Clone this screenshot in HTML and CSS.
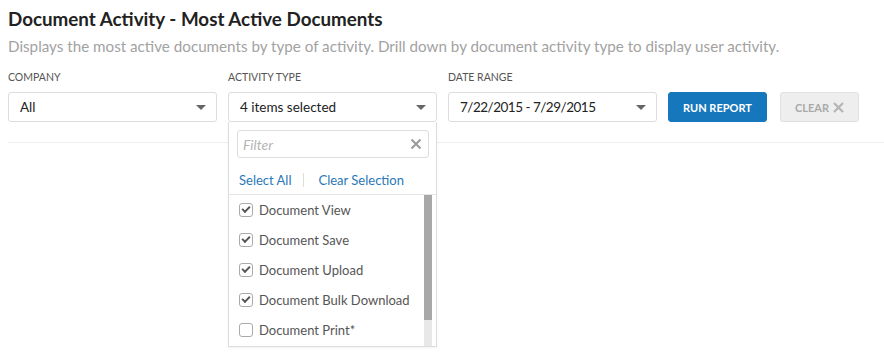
FILE: index.html
```html
<!doctype html>
<html lang="en">
  <head>
    <meta charset="UTF-8">
    <title>Document Activity - Most Active Documents</title>
    <link rel="stylesheet" href="styles.css">
  </head>
  <body>
    <div class="report">
      <h1 class="title">Document Activity - Most Active Documents</h1>
      <p class="subtitle">Displays the most active documents by type of activity. Drill down by document activity type to display user activity.</p>

      <div class="filters">
        <div class="field">
          <div class="fieldLabel">COMPANY</div>
          <div class="select">
            <span>All</span>
            <span class="caret"></span>
          </div>
        </div>

        <div class="field activityField">
          <div class="fieldLabel">ACTIVITY TYPE</div>
          <div class="select">
            <span>4 items selected</span>
            <span class="caret"></span>
          </div>
          <div class="dropdown">
            <div class="filterWrap">
              <div class="filterBox">
                <span class="placeholder">Filter</span>
                <svg class="clearIcon" width="12" height="12" viewBox="0 0 12 12">
                  <path d="M1.5 1.5 L10.5 10.5 M10.5 1.5 L1.5 10.5" stroke="#9a9a9a" stroke-width="2" fill="none"/>
                </svg>
              </div>
            </div>
            <div class="links">
              <a href="#">Select All</a>
              <span class="sep"></span>
              <a href="#">Clear Selection</a>
            </div>
            <div class="listWrap">
              <ul class="options">
                <li><span class="check on"></span>Document View</li>
                <li><span class="check on"></span>Document Save</li>
                <li><span class="check on"></span>Document Upload</li>
                <li><span class="check on"></span>Document Bulk Download</li>
                <li><span class="check"></span>Document Print*</li>
              </ul>
              <div class="scrollbar"><div class="thumb"></div></div>
            </div>
          </div>
        </div>

        <div class="field">
          <div class="fieldLabel">DATE RANGE</div>
          <div class="select">
            <span class="dateText">7/22/2015 - 7/29/2015</span>
            <span class="caret"></span>
          </div>
        </div>

        <button class="btn runBtn" type="button">RUN REPORT</button>
        <button class="btn clearBtn" type="button">CLEAR
          <svg width="11" height="11" viewBox="0 0 11 11">
            <path d="M1 1 L10 10 M10 1 L1 10" stroke="#b4b4b4" stroke-width="2.2" fill="none"/>
          </svg>
        </button>
      </div>

      <div class="divider"></div>
    </div>
  </body>
</html>
```

FILE: styles.css
```css
html, body {
  min-height: 100%;
}

body {
  margin: 0;
  min-height: 362px;
  background: #fff;
  font-family: Lato, "Open Sans", sans-serif;
}

.report {
  padding: 8px 0 0 8px;
}

.title {
  margin: 0;
  font-size: 18.8px;
  font-weight: bold;
  color: #222;
  line-height: 22px;
}

.subtitle {
  margin: 6px 0 0 0;
  font-size: 15.2px;
  color: #a2a2a2;
  line-height: 20px;
}

.filters {
  display: flex;
  align-items: flex-end;
  margin-top: 14px;
}

.field {
  width: 209px;
  margin-right: 11px;
}

.activityField {
  position: relative;
}

.fieldLabel {
  font-size: 10.5px;
  color: #555;
  line-height: 14px;
  margin-bottom: 8px;
}

.select {
  box-sizing: border-box;
  height: 30px;
  border: 1px solid #ddd;
  border-radius: 3px;
  display: flex;
  align-items: center;
  justify-content: space-between;
  padding: 0 10px 0 11px;
  font-size: 13.5px;
  color: #222;
}

.dateText {
  letter-spacing: -0.5px;
}

.caret {
  width: 0;
  height: 0;
  border-left: 5px solid transparent;
  border-right: 5px solid transparent;
  border-top: 5px solid #666;
}

.btn {
  box-sizing: border-box;
  height: 30px;
  border-radius: 3px;
  font-family: Lato, "Open Sans", sans-serif;
  font-size: 11px;
  font-weight: bold;
  cursor: pointer;
}

.runBtn {
  width: 99px;
  background: #1777bc;
  border: 1px solid #1777bc;
  color: #fff;
  margin-right: 13px;
}

.clearBtn {
  width: 79px;
  background: #eee;
  border: 1px solid #e0e0e0;
  color: #aaa;
  display: flex;
  align-items: center;
  justify-content: center;
  gap: 4px;
}

.divider {
  margin-top: 20px;
  border-top: 1px solid #eee;
}

/* dropdown of the activity select */
.dropdown {
  position: absolute;
  top: 52px;
  left: 0;
  width: 209px;
  box-sizing: border-box;
  background: #fff;
  border: 1px solid #ddd;
  border-top: none;
  box-shadow: 0 1px 2px rgba(0, 0, 0, 0.06);
  z-index: 5;
}

.filterWrap {
  padding: 8px 7px 0 8px;
}

.filterBox {
  box-sizing: border-box;
  height: 28px;
  border: 1px solid #ddd;
  border-radius: 3px;
  display: flex;
  align-items: center;
  justify-content: space-between;
  padding: 0 6px 0 5px;
}

.placeholder {
  font-style: italic;
  font-size: 14px;
  color: #b4b4b4;
}

.links {
  box-sizing: border-box;
  display: flex;
  align-items: center;
  padding: 7px 0 0 10px;
  height: 37px;
  font-size: 13px;
  border-bottom: 1px solid #e4e4e4;
}

.links a {
  color: #2a78b8;
  text-decoration: none;
}

.sep {
  width: 1px;
  height: 14px;
  background: #ddd;
  margin: 0 14px 0 12px;
}

.listWrap {
  display: flex;
  height: 151px;
}

.options {
  flex: 1;
  list-style: none;
  margin: 0;
  padding: 0;
}

.options li {
  height: 30px;
  display: flex;
  align-items: center;
  padding-left: 10px;
  font-size: 13px;
  color: #555;
}

.check {
  box-sizing: border-box;
  width: 14px;
  height: 14px;
  border: 1px solid #aaa;
  border-radius: 3px;
  margin-right: 6px;
  position: relative;
}

.check.on::after {
  content: "";
  position: absolute;
  left: 2px;
  top: 2px;
  width: 6px;
  height: 3px;
  border-left: 2px solid #555;
  border-bottom: 2px solid #555;
  transform: rotate(-45deg);
}

.scrollbar {
  width: 8px;
  margin-right: 4px;
  background: #e8e8e8;
}

.thumb {
  height: 125px;
  background: #a8a8a8;
}
```
